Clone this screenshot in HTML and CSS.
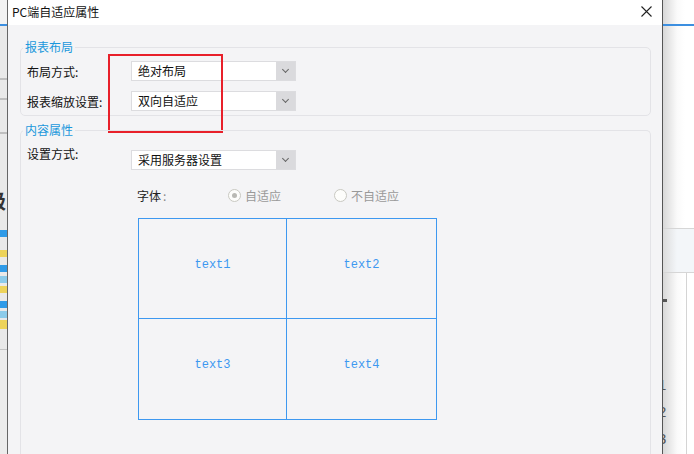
FILE: index.html
```html
<!DOCTYPE html>
<html lang="zh-CN">
<head>
  <meta charset="UTF-8" />
  <meta name="viewport" content="width=device-width, initial-scale=1.0"/>
  <title>PC端自适应属性</title>
  <link rel="stylesheet" href="styles.css">
</head>
<body>
  <div class="side side-left">
    <div class="side-top"></div>
    <div class="side-line l1"></div>
    <div class="side-line l2"></div>
    <div class="side-line l3"></div>
    <div class="side-glyph">级</div>
    <div class="bar blue b1"></div>
    <div class="bar yellow b2"></div>
    <div class="bar blue b3"></div>
    <div class="bar sky b4"></div>
    <div class="bar yellow b5"></div>
    <div class="bar blue b6"></div>
    <div class="bar sky b7"></div>
    <div class="bar yellow b8"></div>
    <div class="side-foot"></div>
  </div>

  <div class="dialog">
    <div class="titlebar">
      <span class="title">PC端自适应属性</span>
      <svg class="close" width="11" height="11" viewBox="0 0 11 11">
        <path d="M0.5 0.5 L10.5 10.5 M10.5 0.5 L0.5 10.5" stroke="#222" stroke-width="1.1" fill="none"/>
      </svg>
    </div>

    <div class="content">
      <fieldset class="group group-layout">
        <legend>报表布局</legend>
        <div class="row">
          <label>布局方式:</label>
          <div class="combo"><span class="combo-text">绝对布局</span><span class="combo-arrow"></span></div>
        </div>
        <div class="row">
          <label>报表缩放设置:</label>
          <div class="combo"><span class="combo-text">双向自适应</span><span class="combo-arrow"></span></div>
        </div>
        <div class="highlight"></div>
      </fieldset>

      <fieldset class="group group-content">
        <legend>内容属性</legend>
        <div class="row row-top">
          <label>设置方式:</label>
          <div class="combo"><span class="combo-text">采用服务器设置</span><span class="combo-arrow"></span></div>
        </div>
        <div class="font-row">
          <span class="font-label">字体<span class="colon">:</span></span>
          <span class="radio checked"></span><span class="radio-text">自适应</span>
          <span class="radio radio-second"></span><span class="radio-text">不自适应</span>
        </div>
        <div class="preview">
          <div class="cell">text1</div>
          <div class="cell">text2</div>
          <div class="cell">text3</div>
          <div class="cell">text4</div>
        </div>
      </fieldset>
    </div>
  </div>

  <div class="side side-right">
    <div class="rs-top"></div>
    <div class="rs-band"></div>
    <div class="rs-grid">
      <span class="rs-mark"></span>
      <span class="rs-num n1">1</span>
      <span class="rs-num">2</span>
      <span class="rs-num">3</span>
    </div>
  </div>
</body>
</html>
```

FILE: styles.css
```css
body {
  margin: 0;
  height: 454px;
  overflow: hidden;
  display: flex;
  font-family: "Noto Sans CJK SC", "Liberation Sans", sans-serif;
  font-size: 12px;
  color: #111;
  background: #fff;
}

/* background window, left of the dialog */
.side-left {
  width: 7px;
  flex-shrink: 0;
  background: #e9e9e9;
  display: flex;
  flex-direction: column;
}
.side-top {
  height: 24px;
  flex-shrink: 0;
  background: #f2f2f2;
  border-bottom: 2px solid #3c8fe0;
}
.side-line {
  height: 2px;
  flex-shrink: 0;
  background: #bfbfbf;
}
.l1 { margin-top: 52px; }
.l2 { margin-top: 18px; }
.l3 { margin-top: 32px; }
.side-glyph {
  margin-top: 56px;
  margin-left: -14px;
  font-size: 20px;
  font-weight: bold;
  line-height: 22px;
  color: #333;
}
.bar { height: 7px; flex-shrink: 0; }
.blue { background: #2f9be8; }
.yellow { background: #edd35a; }
.sky { background: #8ccbea; }
.b1 { margin-top: 18px; }
.b2 { margin-top: 13px; }
.b3 { margin-top: 8px; }
.b4 { margin-top: 4px; }
.b5 { margin-top: 3px; }
.b6 { margin-top: 8px; }
.b7 { margin-top: 3px; }
.b8 { margin-top: 2px; height: 9px; }
.side-foot {
  margin-top: 20px;
  flex: 1;
  border-top: 1px solid #c4c4c4;
  background: #ececec;
}

/* dialog */
.dialog {
  width: 654px;
  flex-shrink: 0;
  border-left: 1px solid #666;
  border-right: 1px solid #555;
  display: flex;
  flex-direction: column;
  overflow: hidden;
  background: #f4f4f6;
}
.titlebar {
  height: 25px;
  flex-shrink: 0;
  background: #fff;
  display: flex;
  align-items: center;
  justify-content: space-between;
  padding: 0 10px 0 4px;
}
.title {
  font-size: 12px;
  line-height: 14px;
  margin-top: -1px;
}
.close {
  margin-top: -2px;
}
.content {
  padding: 14px 11px 0 12px;
  flex: 1;
  display: flex;
  flex-direction: column;
}

.group {
  position: relative;
  margin: 0;
  border: 1px solid #e3e3e7;
  border-radius: 5px;
  padding: 6px 6px 4px 6px;
}
.group legend {
  padding: 0 2px;
  margin-left: -4px;
  color: #1b98dc;
  font-size: 12px;
  line-height: 16px;
}
.group-content {
  margin-top: 6px;
  flex: 1;
  padding-top: 12px;
  border-bottom: none;
  border-radius: 5px 5px 0 0;
}

.row {
  display: flex;
  align-items: center;
  height: 20px;
}
.row + .row {
  margin-top: 10px;
}
.row label {
  width: 104px;
}
.row-top {
  align-items: flex-start;
}
.row-top label {
  line-height: 12px;
  margin-top: -2px;
}

.combo {
  width: 165px;
  height: 20px;
  box-sizing: border-box;
  display: flex;
  background: #fff;
  border: 1px solid #dcdcdf;
}
.combo-text {
  flex: 1;
  padding-left: 6px;
  line-height: 18px;
}
.combo-arrow {
  width: 19px;
  background: #dadadd;
  position: relative;
}
.combo-arrow::after {
  content: "";
  position: absolute;
  left: 7px;
  top: 5px;
  width: 4px;
  height: 4px;
  border-right: 1px solid #666;
  border-bottom: 1px solid #666;
  transform: rotate(45deg);
}

.highlight {
  position: absolute;
  left: 87px;
  top: -1px;
  width: 111px;
  height: 75px;
  border: 2px solid #e8202a;
}

.font-row {
  display: flex;
  align-items: center;
  margin-top: 18px;
  margin-left: 110px;
  height: 14px;
  color: #999;
}
.font-label {
  color: #222;
  width: 91px;
}
.font-label .colon {
  color: #888;
  margin-left: 2px;
}
.radio {
  width: 11px;
  height: 11px;
  border: 1px solid #c9c9c2;
  border-radius: 50%;
  background: #fdfdfb;
  margin-right: 4px;
  position: relative;
}
.radio.checked::after {
  content: "";
  position: absolute;
  left: 3px;
  top: 3px;
  width: 5px;
  height: 5px;
  border-radius: 50%;
  background: #b9b9b4;
}
.radio-second {
  margin-left: 53px;
}

.preview {
  margin-top: 16px;
  margin-left: 111px;
  width: 297px;
  height: 200px;
  display: grid;
  grid-template-columns: 148px 149px;
  grid-template-rows: 100px 100px;
  border: 1px solid #3d98f0;
}
.cell {
  display: flex;
  align-items: center;
  justify-content: center;
  font-family: "Liberation Mono", monospace;
  font-size: 12px;
  color: #3d98f0;
  padding-bottom: 8px;
  box-sizing: border-box;
}
.cell:nth-child(odd) {
  border-right: 1px solid #3d98f0;
}
.cell:nth-child(-n+2) {
  border-bottom: 1px solid #3d98f0;
}

/* background window, right of the dialog */
.side-right {
  flex: 1;
  display: flex;
  flex-direction: column;
  overflow: hidden;
  background: linear-gradient(to right, #d8d8d8, #fafafa 14px, #fff 22px);
}
.rs-top {
  height: 24px;
  flex-shrink: 0;
  border-bottom: 2px solid #3c8fe0;
}
.rs-band {
  margin-top: 202px;
  height: 43px;
  flex-shrink: 0;
  border-top: 1px solid #d6d6d6;
  border-bottom: 1px solid #d6d6d6;
  background: linear-gradient(to right, #dcdcdc, #f3f6f9 14px);
}
.rs-grid {
  flex: 1;
  margin-right: 7px;
  border-right: 1px solid #d4d4d4;
  display: flex;
  flex-direction: column;
  color: #555;
  font-family: "Liberation Sans", sans-serif;
  font-size: 15px;
  line-height: 27px;
}
.rs-mark {
  width: 4px;
  height: 3px;
  background: #555;
  margin-top: 26px;
}
.rs-num {
  margin-left: -5px;
}
.rs-num.n1 {
  margin-top: 69px;
}
```
